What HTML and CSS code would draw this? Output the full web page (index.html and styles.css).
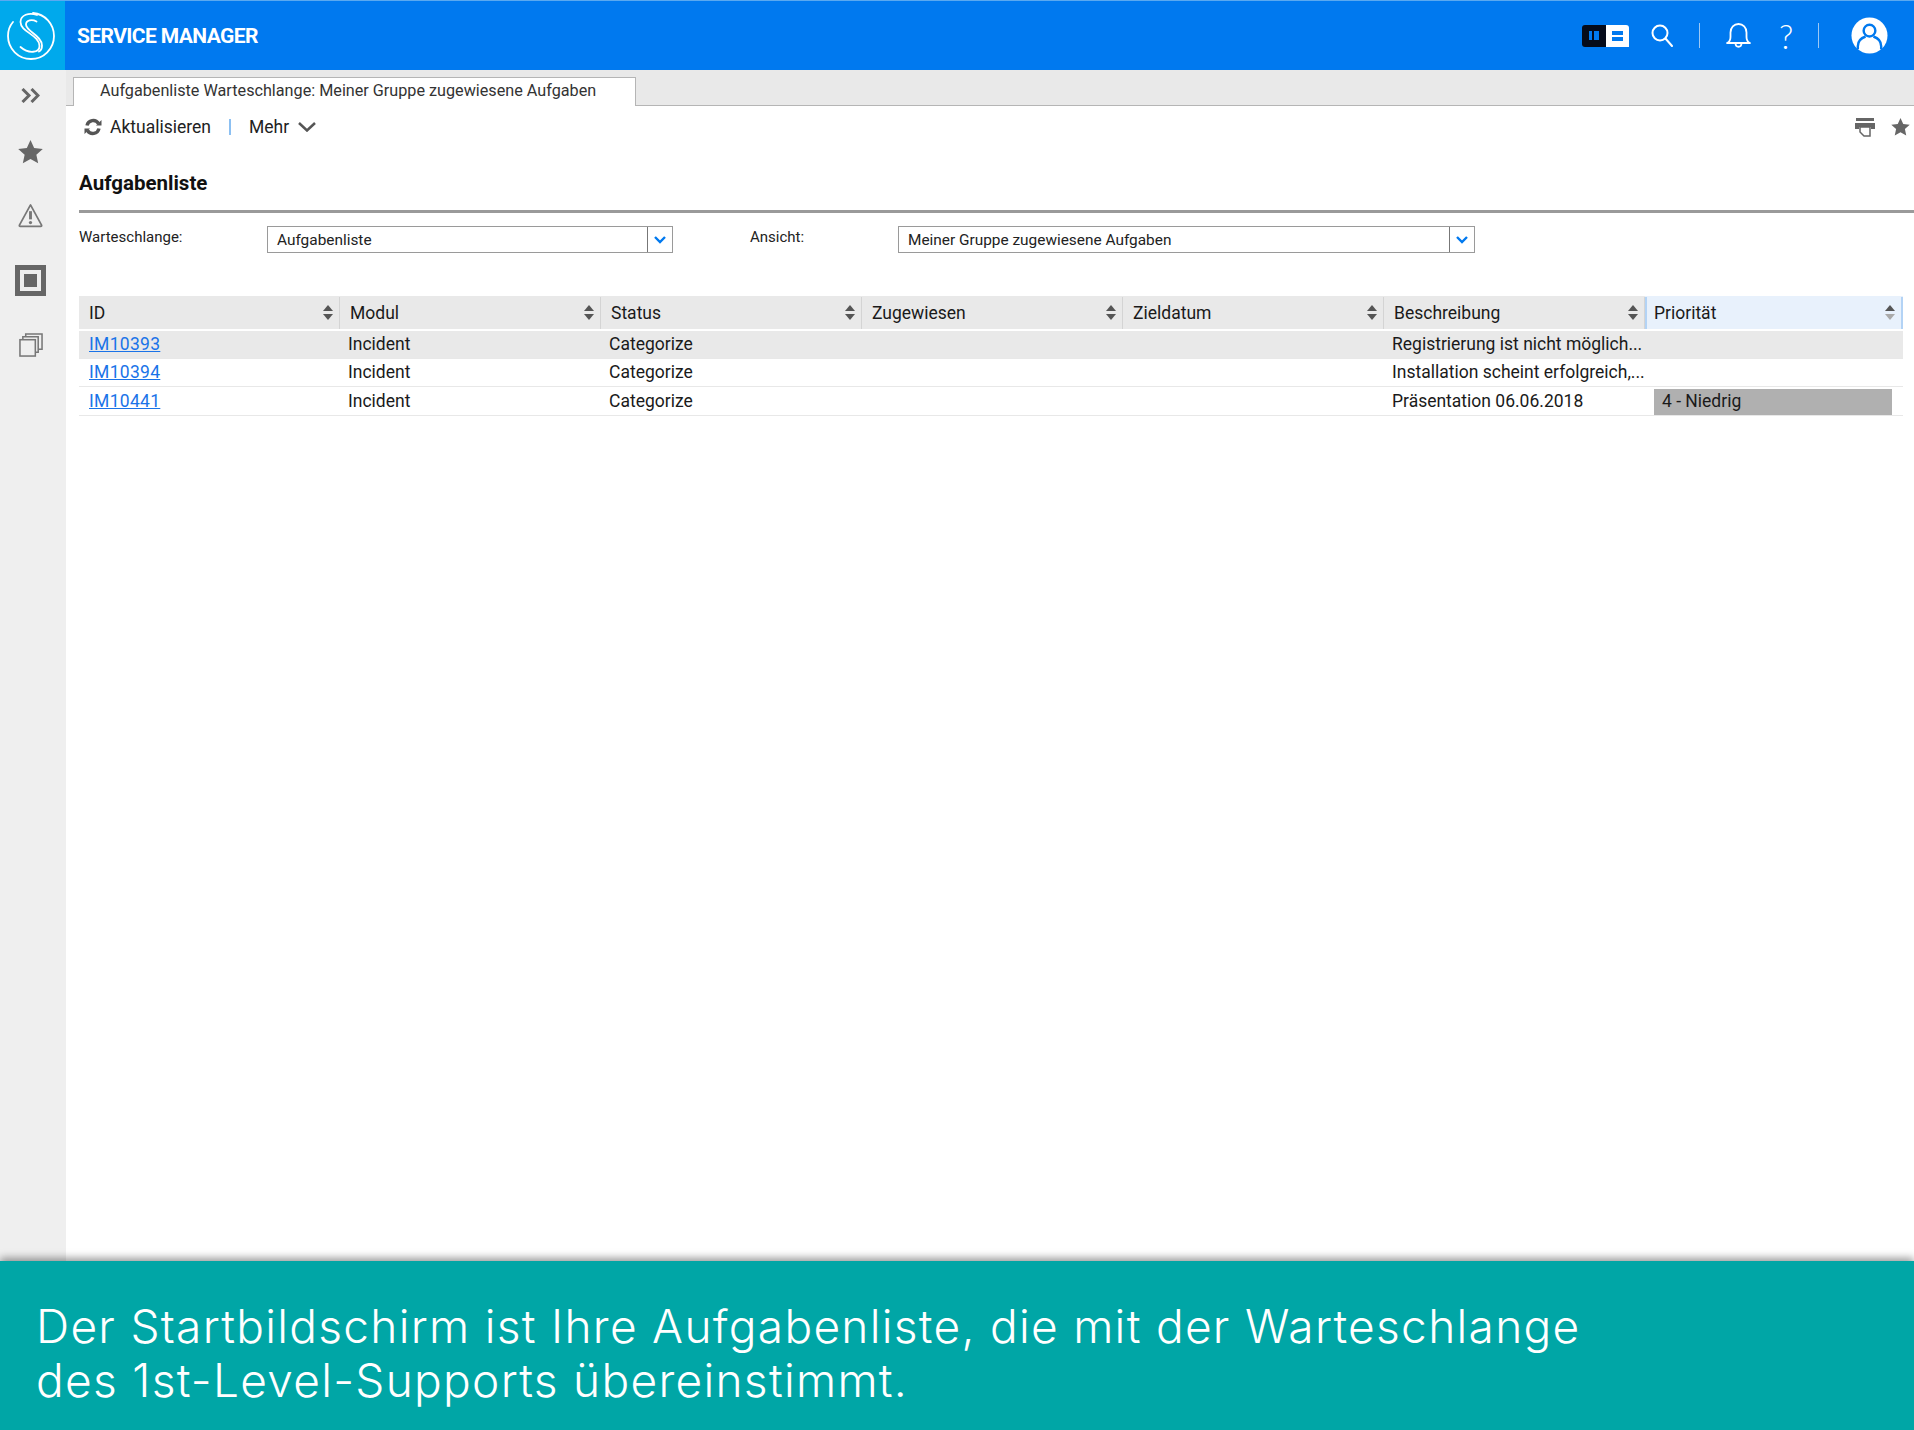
FILE: index.html
```html
<!DOCTYPE html>
<html lang="de">
<head>
<meta charset="UTF-8" />
<meta name="viewport" content="width=device-width, initial-scale=1" />
<title>Service Manager - Aufgabenliste</title>
<link rel="stylesheet" href="styles.css">
</head>
<body>

<header class="topbar">
  <div class="logo">
    <svg width="48" height="48" viewBox="0 0 48 48" fill="none" stroke="#fff" stroke-width="1.800" stroke-linecap="round">
      <path d="M6 10C2.500 14 1 19 1 24c0 12.700 10.300 23 23 23s23-10.300 23-23C47 12 38 2 26 1"/>
      <path d="M30 3C22 0 13.500 3 13.500 10c0 10 19 13 19 24 0 7-11 8-19 1"/>
      <path d="M29.500 9.500C25 7 19 8 19 12.500c0 7 16 11 16 21 0 3-1 5-3 6"/>
    </svg>
  </div>
  <div class="brand">SERVICE MANAGER</div>
  <div class="top-icons">
    <div class="switch">
      <span class="switch-dark"><i class="bar-a"></i><i class="bar-b"></i></span>
      <span class="switch-light"><i></i><i></i></span>
    </div>
    <svg class="icon-search" width="22" height="23" viewBox="0 0 22 23" fill="none" stroke="#fff" stroke-width="2"><circle cx="9" cy="9" r="7.500"/><path d="M14.500 14.500l6.500 7.500" stroke-linecap="round"/></svg>
    <span class="top-sep"></span>
    <svg class="icon-bell" width="25" height="25" viewBox="0 0 25 25" fill="none" stroke="#fff" stroke-width="1.800"><path d="M1 20h23c-2.500-1-3.500-3-3.500-6V9.500C20.500 4.500 17 1 12.500 1S4.500 4.500 4.500 9.500V14c0 3-1 5-3.500 6z" stroke-linejoin="round"/><path d="M9.500 20c0 5 6 5 6 0"/></svg>
    <span class="help">?</span>
    <span class="top-sep"></span>
    <svg class="icon-user" width="37" height="37" viewBox="0 0 38 38"><circle cx="19" cy="19" r="18.500" fill="#fff"/><g fill="none" stroke="#0079ef" stroke-width="2.500"><circle cx="19" cy="14" r="6"/><path d="M7 33v-3c0-6 5-9 8-10M31 33v-3c0-6-5-9-8-10"/></g></svg>
  </div>
</header>

<div class="app">
  <aside class="sidebar">
    <svg width="19" height="15" viewBox="0 0 19 15" fill="none" stroke="#666" stroke-width="3"><path d="M1.500 1l6.500 6.500L1.500 14M10.500 1L17 7.500 10.500 14"/></svg>
    <svg width="25" height="24" viewBox="0 0 26 25"><path fill="#666" d="M13 0l3.800 8.300 9 1-6.700 6.100 1.900 8.900L13 19.800l-8 4.500 1.900-8.900L.2 9.300l9-1z"/></svg>
    <svg class="side-warn" width="25" height="25" viewBox="0 0 26 26" fill="none" stroke="#777" stroke-width="1.800"><path d="M13 2L1.500 23c-.3.700 0 1.200.8 1.200h21.400c.8 0 1.100-.5.800-1.200z" stroke-linejoin="round"/><path d="M13 8.500v8.500" stroke-width="3"/><circle cx="13" cy="20.300" r="1.700" fill="#777" stroke="none"/></svg>
    <svg width="31" height="31" viewBox="0 0 31 31"><rect width="31" height="31" fill="#666"/><rect x="5" y="5" width="21" height="21" fill="#eee"/><rect x="9" y="9" width="13" height="13" fill="#666"/></svg>
    <svg width="24" height="24" viewBox="0 0 25 25" fill="none" stroke="#777" stroke-width="1.600"><rect x="1" y="7" width="16" height="17"/><path d="M4 7V4h16v16h-3M7 4V1h17v16h-4"/></svg>
  </aside>

  <main class="content">
    <div class="tabbar">
      <div class="tab">Aufgabenliste Warteschlange: Meiner Gruppe zugewiesene Aufgaben</div>
    </div>

    <div class="toolbar">
      <svg class="refresh" width="18" height="18" viewBox="0 0 18 18" fill="none" stroke="#555" stroke-width="3.400"><path d="M3 7.500a6.300 6.300 0 0 1 11.500-2M15 10.500a6.300 6.300 0 0 1-11.500 2"/><path d="M17.500 2v5.500H12zM.5 16v-5.500H6z" fill="#555" stroke="none"/></svg>
      <span class="tool-item">Aktualisieren</span>
      <span class="tool-sep"></span>
      <span class="tool-item">Mehr</span>
      <svg class="more-caret" width="18" height="10" viewBox="0 0 18 10" fill="none" stroke="#555" stroke-width="2.500"><path d="M1 1l8 7.500L17 1"/></svg>
      <div class="tool-right">
        <svg width="20" height="19" viewBox="0 0 20 19"><path fill="#666" d="M1 0h18v3H1zM0 5h20v6h-4V9H4v2H0z"/><path fill="#fff" stroke="#666" stroke-width="1.500" d="M5 9h10v9H9l-4-4z"/></svg>
        <svg width="19" height="18" viewBox="0 0 26 25"><path fill="#666" d="M13 0l3.800 8.300 9 1-6.700 6.100 1.900 8.900L13 19.800l-8 4.500 1.900-8.900L.2 9.300l9-1z"/></svg>
      </div>
    </div>

    <section class="page">
      <h1>Aufgabenliste</h1>

      <div class="filters">
        <label class="filter-label">Warteschlange:</label>
        <div class="combo combo-queue">
          <span class="combo-value">Aufgabenliste</span>
          <span class="combo-btn"><svg width="12" height="8" viewBox="0 0 12 8" fill="none" stroke="#0079ef" stroke-width="2.400"><path d="M1 1l5 5 5-5"/></svg></span>
        </div>
        <label class="filter-label filter-label-view">Ansicht:</label>
        <div class="combo combo-view">
          <span class="combo-value">Meiner Gruppe zugewiesene Aufgaben</span>
          <span class="combo-btn"><svg width="12" height="8" viewBox="0 0 12 8" fill="none" stroke="#0079ef" stroke-width="2.400"><path d="M1 1l5 5 5-5"/></svg></span>
        </div>
      </div>

      <table class="grid">
        <thead>
          <tr>
            <th><span class="th-in">ID<i class="sort"></i></span></th>
            <th><span class="th-in">Modul<i class="sort"></i></span></th>
            <th><span class="th-in">Status<i class="sort"></i></span></th>
            <th><span class="th-in">Zugewiesen<i class="sort"></i></span></th>
            <th><span class="th-in">Zieldatum<i class="sort"></i></span></th>
            <th><span class="th-in">Beschreibung<i class="sort"></i></span></th>
            <th class="th-active"><span class="th-in">Priorität<i class="sort sort-asc"></i></span></th>
          </tr>
        </thead>
        <tbody>
          <tr class="row-selected">
            <td><a href="#">IM10393</a></td><td>Incident</td><td>Categorize</td><td></td><td></td><td>Registrierung ist nicht möglich...</td><td></td>
          </tr>
          <tr>
            <td><a href="#">IM10394</a></td><td>Incident</td><td>Categorize</td><td></td><td></td><td>Installation scheint erfolgreich,...</td><td></td>
          </tr>
          <tr>
            <td><a href="#">IM10441</a></td><td>Incident</td><td>Categorize</td><td></td><td></td><td>Präsentation 06.06.2018</td><td class="prio-cell"><span class="prio">4 - Niedrig</span></td>
          </tr>
        </tbody>
      </table>
    </section>
  </main>
</div>

<footer class="caption">Der Startbildschirm ist Ihre Aufgabenliste, die mit der Warteschlange<br>des 1st-Level-Supports übereinstimmt.</footer>

</body>
</html>
```

FILE: styles.css
```css
* {
  box-sizing: border-box;
}
html, body {
  height: 100%;
}
body {
  margin: 0;
  height: 1430px;
  display: flex;
  flex-direction: column;
  overflow: hidden;
  font-family: Roboto, Arial, sans-serif;
  font-size: 17px;
  background: #fff;
  color: #1a1a1a;
}

/* top bar */
.topbar {
  height: 70px;
  flex: none;
  display: flex;
  align-items: center;
  background: #0079ef;
  border-top: 1px solid #5aa9f0;
}
.logo {
  width: 65px;
  height: 100%;
  display: flex;
  align-items: center;
  padding-left: 7px;
  background: #00a9ec;
}
.brand {
  margin-left: 12px;
  color: #fff;
  font-size: 21px;
  font-weight: 700;
  letter-spacing: -0.6px;
}
.top-icons {
  margin-left: auto;
  display: flex;
  align-items: center;
  padding-right: 26px;
}
.switch {
  display: flex;
  width: 47px;
  height: 22px;
}
.switch span {
  width: 50%;
  display: flex;
  align-items: center;
  justify-content: center;
}
.switch-dark {
  background: #050b1a;
  border-radius: 3px 0 0 3px;
  gap: 2px;
}
.switch-dark i {
  display: block;
  height: 9px;
  background: #0079ef;
}
.bar-a {
  width: 3px;
}
.bar-b {
  width: 5px;
}
.switch-light {
  flex-direction: column;
  background: #fff;
  border-radius: 0 3px 0 0;
  gap: 2px;
}
.switch-light i {
  display: block;
  width: 11px;
  height: 4px;
  background: #0079ef;
}
.icon-search {
  margin-left: 22px;
}
.top-sep {
  width: 1px;
  height: 25px;
  background: #9cc8f5;
}
.icon-search + .top-sep {
  margin-left: 26px;
}
.icon-bell {
  margin-left: 26px;
}
.help {
  margin-left: 28px;
  width: 15px;
  color: #fff;
  font-family: Lato, Arial, sans-serif;
  font-size: 33px;
  line-height: 30px;
  font-weight: 300;
}
.help + .top-sep {
  margin-left: 24px;
}
.icon-user {
  margin-left: 32px;
}

/* main area */
.app {
  flex: 1;
  display: flex;
  min-height: 0;
}
.sidebar {
  width: 66px;
  flex: none;
  display: flex;
  flex-direction: column;
  align-items: center;
  gap: 37px;
  padding: 18px 5px 0 0;
  background: #efefef;
}
.side-warn {
  margin: 2px 0 0;
}
.content {
  flex: 1;
  min-width: 0;
}
.tabbar {
  height: 36px;
  padding: 7px 0 0 7px;
  background: #e9e9e9;
  border-bottom: 1px solid #b5b5b5;
}
.tab {
  width: 563px;
  height: 29px;
  padding-left: 26px;
  background: #fff;
  border: 1px solid #b5b5b5;
  border-bottom: 0;
  font-size: 16.200px;
  line-height: 25px;
  color: #333;
}
.toolbar {
  height: 42px;
  display: flex;
  align-items: center;
  padding-left: 18px;
  font-size: 17.500px;
}
.tool-item {
  color: #222;
}
.refresh {
  margin-right: 8px;
}
.tool-sep {
  width: 2px;
  height: 16px;
  margin: 0 18px 0 18px;
  background: #8cc0f2;
}
.more-caret {
  margin-left: 9px;
}
.tool-right {
  margin-left: auto;
  display: flex;
  gap: 16px;
  padding-right: 4px;
}
.page {
  padding-left: 13px;
}
h1 {
  margin: 0;
  height: 65px;
  padding-top: 22px;
  font-size: 20.500px;
  line-height: 26px;
  font-weight: 700;
  color: #111;
  border-bottom: 3px solid #9a9a9a;
}

/* filter row */
.filters {
  display: flex;
  align-items: flex-start;
  padding-top: 13px;
}
.filter-label {
  width: 188px;
  font-size: 15px;
  line-height: 22px;
  color: #222;
}
.filter-label-view {
  width: 148px;
  margin-left: 77px;
}
.combo {
  height: 27px;
  display: flex;
  align-items: center;
  border: 1px solid #9a9a9a;
  font-size: 15.400px;
}
.combo-queue {
  width: 406px;
}
.combo-view {
  width: 577px;
}
.combo-value {
  flex: 1;
  padding-left: 9px;
  color: #222;
}
.combo-btn {
  width: 25px;
  height: 25px;
  display: flex;
  align-items: center;
  justify-content: center;
  border-left: 1px solid #777;
}

/* task table */
.grid {
  width: 1824px;
  margin-top: 43px;
  border-collapse: collapse;
  table-layout: fixed;
  font-size: 17.500px;
}
.grid th {
  width: 261px;
  height: 34px;
  padding: 0;
  font-weight: 400;
  text-align: left;
  background: #e9e9e9;
  border-bottom: 2px solid #fff;
}
.th-in {
  display: flex;
  align-items: center;
  justify-content: space-between;
  height: 32px;
  padding: 0 5px 0 10px;
  border-right: 1px solid #d4d4d4;
}
.grid .th-active {
  width: 258px;
  background: #e8f1fc;
}
.th-active .th-in {
  border-left: 2px solid #b3d3f5;
  border-right: 2px solid #b3d3f5;
  padding-left: 7px;
}
.sort {
  position: relative;
  display: block;
  width: 11px;
  height: 15px;
}
.sort::before,
.sort::after {
  content: "";
  position: absolute;
  left: 0;
  border-left: 5.500px solid transparent;
  border-right: 5.500px solid transparent;
}
.sort::before {
  top: 0;
  border-bottom: 6px solid #555;
}
.sort::after {
  bottom: 0;
  border-top: 6px solid #555;
}
.sort-asc::after {
  border-top-color: #aaa;
}
.grid td {
  height: 28px;
  padding: 0 0 0 8px;
  border-bottom: 1px solid #e8e8e8;
  white-space: nowrap;
  color: #1a1a1a;
}
.grid td:first-child {
  padding-left: 10px;
}
.row-selected td {
  background: #e9e9e9;
}
.grid a {
  color: #1a73e8;
  letter-spacing: 0.3px;
}
.grid .prio-cell {
  padding: 2px 11px 0 9px;
}
.prio {
  display: block;
  height: 26px;
  padding-left: 8px;
  line-height: 25px;
  background: #b0b0b0;
}

/* caption */
.caption {
  height: 169px;
  flex: none;
  padding: 38px 0 0 36px;
  background: #00a6a6;
  color: #fff;
  font-family: Inter, Arial, sans-serif;
  font-size: 46px;
  font-weight: 300;
  letter-spacing: 1.300px;
  line-height: 54px;
  box-shadow: 0 -3px 8px rgb(0 0 0 / 0.4);
  position: relative;
}
```
